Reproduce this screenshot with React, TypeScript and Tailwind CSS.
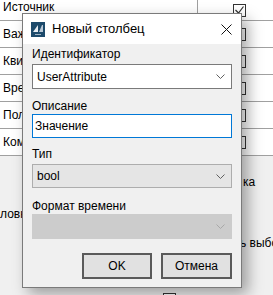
import React from "react";

const font = { fontFamily: '"Liberation Sans", Arial, sans-serif' };

function Chevron({ color = "#606060" }: { color?: string }) {
  return (
    <svg width="9" height="5" viewBox="0 0 9 5" className="shrink-0">
      <path d="M0.5 0.5 L4.5 4.5 L8.5 0.5" fill="none" stroke={color} strokeWidth="1" />
    </svg>
  );
}

function AppIcon() {
  return (
    <svg width="14" height="15" viewBox="0 0 14 15">
      <rect width="14" height="15" fill="#1d4a6b" />
      <path d="M2 10 L7 3 L7 10 Z" fill="#e8eef3" />
      <path d="M8 10 L11 3 L12 3 L12 10 Z" fill="#b9c8d6" />
      <rect x="4" y="12" width="6" height="1" fill="#9fb3c4" />
    </svg>
  );
}

// only the part of each row name that shows beside the dialog
const rows = ["Источник", "Важ", "Квит", "Врем", "Полн", "Комм"];

export default function App() {
  return (
    <div className="relative h-[295px] w-[273px] overflow-hidden bg-[#f0f0f0] text-[12px] text-black" style={font}>
      {/* background table */}
      <div className="bg-white">
        {rows.map((r, i) => (
          <div
            key={r}
            className={`flex border-b border-[#a0a0a0] ${i === 0 ? "h-[21px]" : "h-[27px]"}`}
          >
            {i === 0 ? (
              <div className="w-[198px] border-r border-[#a0a0a0] pl-[3px] leading-[14px]">{r}</div>
            ) : (
              <div className="flex w-[198px] items-center whitespace-nowrap pl-[3px]">{r}</div>
            )}
            <div className="flex flex-1 items-center pl-[35px]">
              <div className="flex h-[13px] w-[13px] items-center justify-center border border-[#333] bg-white">
                {i === 0 && (
                  <svg width="9" height="8" viewBox="0 0 9 8">
                    <path d="M0.5 4 L3.5 7 L8.5 0.5" fill="none" stroke="#333" strokeWidth="1.2" />
                  </svg>
                )}
              </div>
            </div>
          </div>
        ))}
      </div>
      <div className="relative h-[139px]">
        <span className="absolute left-[243px] top-[17px]">ка</span>
        <span className="absolute left-0 top-[49px] whitespace-nowrap">ловк</span>
        <span className="absolute left-[240px] top-[78px] whitespace-nowrap">ь выбо</span>
        <div className="absolute left-[163px] top-[137px] h-[13px] w-[13px] border border-[#333] bg-white" />
      </div>

      {/* dialog */}
      <div className="absolute left-[22px] top-[13px] flex h-[275px] w-[220px] flex-col border border-[#7a7a7a] bg-[#f0f0f0] shadow-[6px_6px_14px_rgba(0,0,0,0.35)]">
        <div className="flex h-[30px] items-center bg-white pl-[8px] pr-[8px]">
          <AppIcon />
          <span className="ml-[7px] text-[13px]">Новый столбец</span>
          <svg width="11" height="11" viewBox="0 0 11 11" className="ml-auto mr-[1px]">
            <path d="M0.5 0.5 L10.5 10.5 M10.5 0.5 L0.5 10.5" stroke="#111" strokeWidth="1" />
          </svg>
        </div>
        <div className="flex flex-col px-[9px]">
          <label className="mt-[3px] h-[15px] leading-[15px]">Идентификатор</label>
          <div className="mt-[2px] flex h-[25px] items-center border border-[#7a7a7a] bg-white pl-[4px] pr-[6px]">
            <span>UserAttribute</span>
            <span className="ml-auto"><Chevron /></span>
          </div>
          <label className="mt-[10px] h-[15px] leading-[15px]">Описание</label>
          <div className="flex h-[24px] items-center border border-[#0078d7] bg-white pl-[2px]">
            Значение
          </div>
          <label className="mt-[9px] h-[15px] leading-[15px]">Тип</label>
          <div className="mt-[2px] flex h-[24px] items-center border border-[#adadad] bg-[#e5e5e5] pl-[4px] pr-[6px]">
            <span>bool</span>
            <span className="ml-auto"><Chevron /></span>
          </div>
          <label className="mt-[11px] h-[15px] leading-[15px]">Формат времени</label>
          <div className="flex h-[25px] items-center border border-[#cccccc] bg-[#cccccc] pr-[6px]">
            <span className="ml-auto"><Chevron color="#a8a8a8" /></span>
          </div>
          <div className="mt-[14px] flex justify-end gap-[9px]">
            <button className="h-[26px] w-[70px] border-2 border-[#5a5a5a] bg-[#e1e1e1]">OK</button>
            <button className="h-[26px] w-[71px] border-2 border-[#5a5a5a] bg-[#e1e1e1]">Отмена</button>
          </div>
        </div>
      </div>
    </div>
  );
}
